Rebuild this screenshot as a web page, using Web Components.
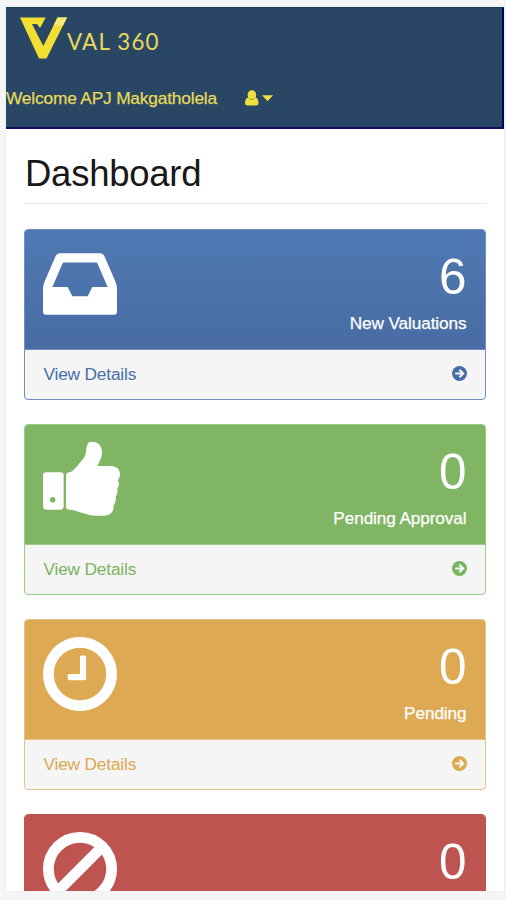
<!DOCTYPE html>
<html lang="en"><head><meta charset="utf-8"><title>VAL 360 Dashboard</title>
<style>
html,body{margin:0;height:100%;overflow:hidden;background:#f5f5f5}
body{font-family:"Liberation Sans",Arial,sans-serif}
</style></head><body>
<val-app>
<val-header slot="header" user="Welcome APJ Makgatholela"></val-header>
<val-panel tone="blue" icon="inbox" count="6" label="New Valuations"></val-panel>
<val-panel tone="green" icon="thumb" count="0" label="Pending Approval"></val-panel>
<val-panel tone="orange" icon="clock" count="0" label="Pending"></val-panel>
<val-panel tone="red" icon="ban" count="0"></val-panel>
</val-app>
<script>
const ring='q0 209-103 385.500t-279.500 279.500-385.500 103-385.500-103-279.500-279.500-103-385.500 103-385.500 279.500-279.500 385.500-103 385.500 103 279.500 279.500 103 385.500z';
const icons={
inbox:'<svg viewBox="128 128 1536 1536"><path d="M1151 960h316q-1-3-2.500-8t-2.500-8l-212-496h-708l-212 496q-1 2-2.500 8t-2.500 8h316l95 192h320zm513 30v482q0 26-19 45t-45 19h-1408q-26 0-45-19t-19-45v-482q0-62 25-123l238-552q10-25 36.500-42t52.500-17h832q26 0 52.500 17t36.500 42l238 552q25 61 25 123z"/></svg>',
clock:'<svg viewBox="128 128 1536 1536"><path d="M1024 544v448q0 14-9 23t-23 9h-320q-14 0-23-9t-9-23v-64q0-14 9-23t23-9h224v-352q0-14 9-23t23-9h64q14 0 23 9t9 23zm416 352q0-148-73-273t-198-198-273-73-273 73-198 198-73 273 73 273 198 198 273 73 273-73 198-198 73-273zm224 0'+ring+'"/></svg>',
arrow:'<svg viewBox="0 0 15 15"><circle cx="7.500" cy="7.500" r="7.500"/><path d="M3.200 7.500H11M7.400 3.700 11.200 7.500 7.400 11.300" style="fill:none;stroke:#f5f5f5;stroke-width:2.100"/></svg>',
thumb:'<svg viewBox="69 66 222 222"><path fill-rule="evenodd" d="M79 157H121Q131 157 131 167V259Q131 269 121 269H79Q69 269 69 259V167Q69 157 79 157ZM98 231a8.500 8.500 0 1 0 .01 0Z"/><path d="M138 167Q138 158 148 157C159 155 167 143 177 131C184 122 193 116 196 106C200 94 197 65 213 65C237 65 246 79 246 98C246 116 236 124 233 138H274C289 138 300 149 300 162Q300 174 294 180Q300 194 292 206Q295 219 287 231Q289 246 281 256C281 278 271 287 249 287H228C197 287 171 269 148 269Q138 269 138 260Z"/></svg>',
ban:'<svg viewBox="0 0 74 74" style="fill:none;stroke:#fff;stroke-width:10.800"><circle cx="37" cy="37" r="31.600"/><path d="M59.500 14.500 14.500 59.500"/></svg>'};

class ValApp extends HTMLElement{constructor(){super();this.attachShadow({mode:'open'}).innerHTML=`<style>
:host{display:block;box-sizing:border-box;height:900px;padding:7px 2px 9px 6px;overflow:hidden;background:#f5f5f5}
.page{height:884px;overflow:hidden;background:#fff;box-shadow:0 0 0 1px #efefef}
main{padding:0 18.500px 0 18px}
h1{box-sizing:border-box;height:75px;margin:0 0 25px;padding:24px 0 0 1px;border-bottom:1px solid #e8e8e8;font-size:36.500px;line-height:42px;font-weight:400;color:#181818;letter-spacing:-.25px}
.list{display:grid;gap:24px}
</style><div class="page"><slot name="header"></slot><main><h1>Dashboard</h1><div class="list"><slot></slot></div></main></div>`}}

class ValHeader extends HTMLElement{connectedCallback(){this.attachShadow({mode:'open'}).innerHTML=`<style>
:host{display:block;box-sizing:border-box;width:497.500px;height:122px;background:#294665;border-right:2px solid #02054c;border-bottom:2px solid #10105c;border-top:1px solid #17405c;color:#e7da58}
.brand{display:flex;padding:9px 0 0 14px;height:54px;box-sizing:border-box}
.brand svg{width:47px;height:42px}
.brand span{font:22.300px/28px Lato,sans-serif;letter-spacing:1.200px;padding-top:11px}
.user{display:flex;align-items:center;padding-top:15px;height:57px;box-sizing:border-box;font-size:17.300px;letter-spacing:-.16px;white-space:nowrap;-webkit-text-stroke:.25px currentColor}
.user svg{width:30px;height:16px;margin-left:27px;fill:#f1df3d}
</style><div class="brand"><svg viewBox="20 17 47 42"><path fill="#f3df32" d="M20 17.500H45.700L40 28 37 24H32L43.300 46 57.500 17.500H67L46.500 58.500H39Z"/><path fill="#f8e979" d="M57.500 17.500H67L63 25.500H53.500Z"/></svg><span>VAL 360</span></div>
<div class="user"><span></span><svg viewBox="0 0 30 16"><path d="M3.600 4.900a4.300 4.700 0 1 0 8.600 0a4.300 4.700 0 1 0-8.600 0ZM4 7.500Q7.900 10.500 11.800 7.500Q14.500 8.500 14.500 13Q14.500 15.500 12 15.500H3.500Q1 15.500 1 13Q1 8.500 4 7.500ZM18 5.300H29L23.500 11.200Z"/></svg></div>`;
this.shadowRoot.querySelector('.user span').textContent=this.getAttribute('user')}}

class ValPanel extends HTMLElement{connectedCallback(){const label=this.getAttribute('label');this.attachShadow({mode:'open'}).innerHTML=`<style>
:host{display:block;box-sizing:border-box;height:171px;border:1px solid var(--edge);border-radius:4px;overflow:hidden;background:#f5f5f5;color:var(--c)}
:host([tone=blue]){--c:#456ea8;--edge:#6e8fc0;--bg:linear-gradient(#5079b3,#486ca3)}
:host([tone=green]){--c:#7cb360;--edge:#9cca87;--bg:#7fb563}
:host([tone=orange]){--c:#dda94f;--edge:#e6c18b;--bg:#dda952}
:host([tone=red]){--c:#bd5450;--edge:#bd5450;--bg:#bd5450}
.top{display:flex;justify-content:space-between;box-sizing:border-box;height:120px;margin:-1px -1px 0;padding:18px 19px 0 19.300px;background:var(--bg);color:#fff}
svg{display:block;fill:currentColor;overflow:visible}
.top svg{width:74px;height:74px}
.info{text-align:right}
.n{font-size:49.400px;line-height:54px;padding-top:2.500px}
.l{font-size:17.200px;line-height:24px;padding-top:7px;letter-spacing:-.1px;-webkit-text-stroke:.25px currentColor}
.foot{display:flex;justify-content:space-between;align-items:center;height:50px;padding:0 18px 0 18.500px;border-top:1px solid var(--edge);box-sizing:border-box;font-size:17.300px;letter-spacing:-.18px}
.foot svg{width:15px;height:15px;margin-bottom:2px}
</style><div class="top">${icons[this.getAttribute('icon')]}<div class="info"><div class="n">${this.getAttribute('count')}</div>${label?`<div class="l">${label}</div>`:''}</div></div>${label?`<div class="foot"><span>View Details</span>${icons.arrow}</div>`:''}`}}
customElements.define('val-header',ValHeader);customElements.define('val-panel',ValPanel);customElements.define('val-app',ValApp);
</script></body></html>
